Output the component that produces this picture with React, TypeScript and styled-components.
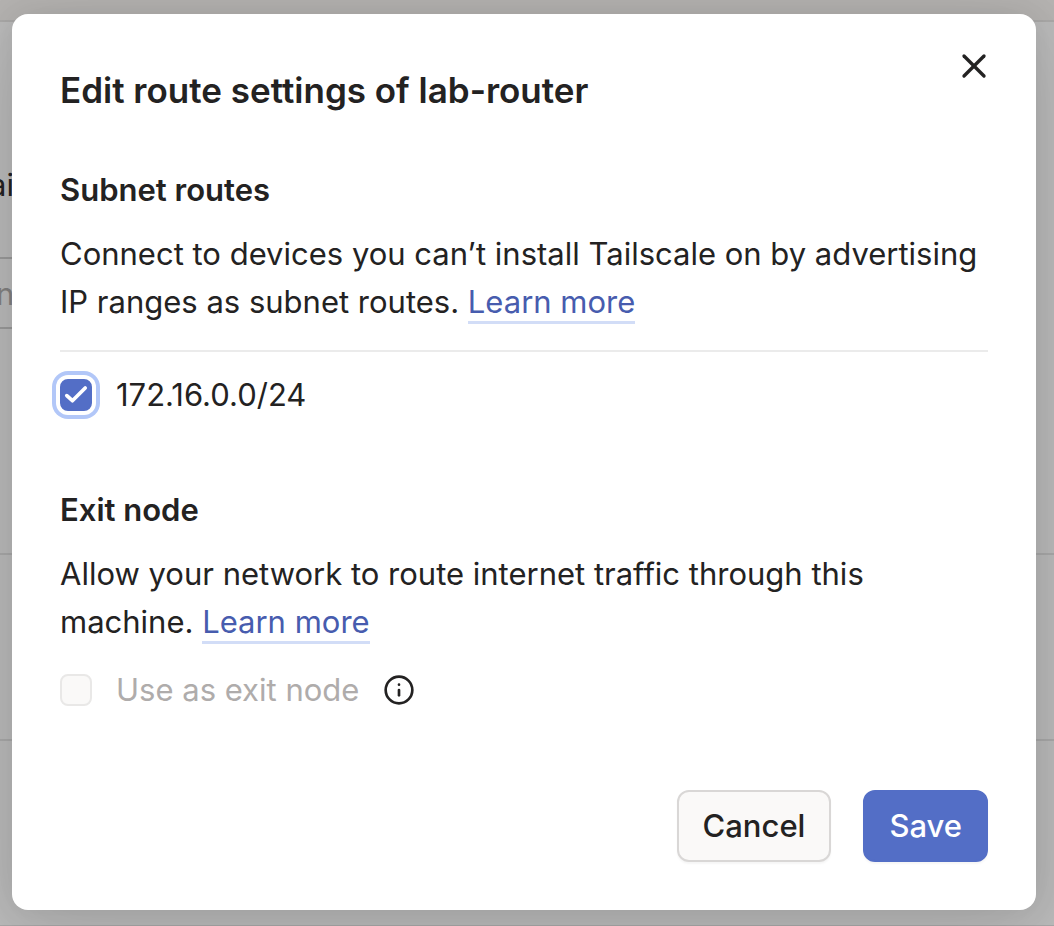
import React, { useState } from "react";
import styled, { createGlobalStyle } from "styled-components";
import { Info, X } from "lucide-react";

const GlobalStyle = createGlobalStyle`
  *, *::before, *::after { box-sizing: border-box; }
  body {
    margin: 0;
    overflow: hidden;
    background: #bababa;
    color: #232222;
    font-family: Inter, "Liberation Sans", sans-serif;
    font-size: 31px;
    line-height: 48px;
    -webkit-font-smoothing: antialiased;
  }
  h1, h2, p { margin: 0; }
  button, input { font: inherit; color: inherit; }
`;

const Screen = styled.div`
  display: grid;
  min-height: 100vh;
  overflow: hidden;
  > * { grid-area: 1 / 1; min-width: 0; }
`;

const Page = styled.div`
  display: flex;
  flex-direction: column;
`;

const TopBar = styled.div`
  height: 22px;
  background: #b5b3b1;
  border-bottom: 2px solid #a9a8a7;
`;

const Intro = styled.p`
  margin: 139px 0 48px -11px;
`;

const Search = styled.input`
  width: 60%;
  height: 72px;
  margin: 0 0 0 -24px;
  padding: 0 18px;
  border: 2px solid #999;
  border-radius: 12px;
  background: transparent;
  &::placeholder { color: #828180; opacity: 1; }
`;

const PageRow = styled.div<{ $height: number }>`
  height: ${(p) => p.$height}px;
  border-bottom: 2px solid #a8a8a8;
`;

const Overlay = styled.div`
  position: relative;
  padding: 14px 18px 16px 12px;
`;

const Dialog = styled.section`
  display: flex;
  flex-direction: column;
  padding: 48px;
  border-radius: 16px;
  background: #fff;
  box-shadow: 0 20px 80px rgba(0, 0, 0, 0.1), 0 0 32px rgba(0, 0, 0, 0.1);
`;

const DialogHeader = styled.header`
  display: flex;
  justify-content: space-between;
  align-items: flex-start;
  margin-bottom: 48px;
`;

const Title = styled.h1`
  font-size: 35px;
  line-height: 56px;
  font-weight: 600;
`;

const CloseButton = styled.button`
  display: flex;
  margin: -16px -6px 0 0;
  padding: 0;
  border: 0;
  background: none;
  cursor: pointer;
`;

const Group = styled.section`
  & + & { margin-top: 48px; }
`;

const GroupTitle = styled.h2`
  margin-bottom: 16px;
  font-size: 31px;
  line-height: 48px;
  font-weight: 600;
`;

const Link = styled.a`
  padding-bottom: 1px;
  color: #475cae;
  text-decoration: none;
  border-bottom: 3px solid #d2ddf7;
`;

const RouteList = styled.div`
  margin-top: 24px;
  border-top: 2px solid #ebebeb;
`;

const Option = styled.div`
  display: flex;
  align-items: center;
  gap: 24px;
`;

const RouteOption = styled(Option)`
  height: 86px;
`;

const ExitOption = styled(Option)`
  margin-top: 20px;
`;

const OptionLabel = styled.label<{ $muted?: boolean }>`
  color: ${(p) => (p.$muted ? "#afacab" : "inherit")};
`;

const CheckFrame = styled.span`
  display: grid;
  > * { grid-area: 1 / 1; }
  svg { pointer-events: none; z-index: 1; }
`;

const Checkbox = styled.input.attrs({ type: "checkbox" })`
  appearance: none;
  width: 32px;
  height: 32px;
  margin: 0;
  border: 2px solid #e9e8e7;
  border-radius: 8px;
  background: #faf9f8;
  outline: none;
  &:checked {
    border-color: #536ec6;
    background: #536ec6;
    box-shadow: 0 0 0 4px #fff, 0 0 0 8px #b2c7f8;
  }
`;

const Actions = styled.footer`
  display: flex;
  justify-content: flex-end;
  gap: 32px;
  margin-top: 76px;
`;

const Button = styled.button<{ $primary?: boolean }>`
  height: 72px;
  padding: 0 24px;
  border: 2px solid ${(p) => (p.$primary ? "#536ec6" : "#d9d7d6")};
  border-radius: 12px;
  background: ${(p) => (p.$primary ? "#536ec6" : "#faf9f8")};
  color: ${(p) => (p.$primary ? "#fff" : "#232222")};
  box-shadow: 0 2px 2px rgba(0, 0, 0, 0.04);
  font-weight: 500;
  cursor: pointer;
`;

export default function App() {
  const [routed, setRouted] = useState(true);

  return (
    <Screen>
      <GlobalStyle />
      <Page aria-hidden="true">
        <TopBar />
        <Intro>ai</Intro>
        <Search placeholder="n" tabIndex={-1} aria-label="n" />
        <PageRow $height={226} />
        <PageRow $height={186} />
        <PageRow $height={186} />
      </Page>
      <Overlay>
        <Dialog role="dialog" aria-modal="true" aria-labelledby="dialog-title">
          <DialogHeader>
            <Title id="dialog-title">Edit route settings of lab-router</Title>
            <CloseButton type="button" aria-label="Close">
              <X size={40} />
            </CloseButton>
          </DialogHeader>

          <Group>
            <GroupTitle>Subnet routes</GroupTitle>
            <p>
              Connect to devices you can’t install Tailscale on by advertising
              IP ranges as subnet routes. <Link href="#subnets">Learn more</Link>
            </p>
            <RouteList>
              <RouteOption>
                <CheckFrame>
                  <Checkbox
                    id="route"
                    checked={routed}
                    onChange={(e) => setRouted(e.target.checked)}
                  />
                  {routed && (
                    <svg width="32" height="32" viewBox="0 0 32 32" fill="none" aria-hidden="true">
                      <path
                        d="M6.8 16.6 12.4 21.7 25.2 9"
                        stroke="#fff"
                        strokeWidth="3.7"
                        strokeLinecap="round"
                        strokeLinejoin="round"
                      />
                    </svg>
                  )}
                </CheckFrame>
                <OptionLabel htmlFor="route">172.16.0.0/24</OptionLabel>
              </RouteOption>
            </RouteList>
          </Group>

          <Group>
            <GroupTitle>Exit node</GroupTitle>
            <p>
              Allow your network to route internet traffic through this
              machine. <Link href="#exit-nodes">Learn more</Link>
            </p>
            <ExitOption>
              <CheckFrame>
                <Checkbox id="exit" disabled />
              </CheckFrame>
              <OptionLabel htmlFor="exit" $muted>
                Use as exit node
              </OptionLabel>
              <Info size={32} aria-hidden="true" />
            </ExitOption>
          </Group>

          <Actions>
            <Button type="button">Cancel</Button>
            <Button type="button" $primary>
              Save
            </Button>
          </Actions>
        </Dialog>
      </Overlay>
    </Screen>
  );
}
